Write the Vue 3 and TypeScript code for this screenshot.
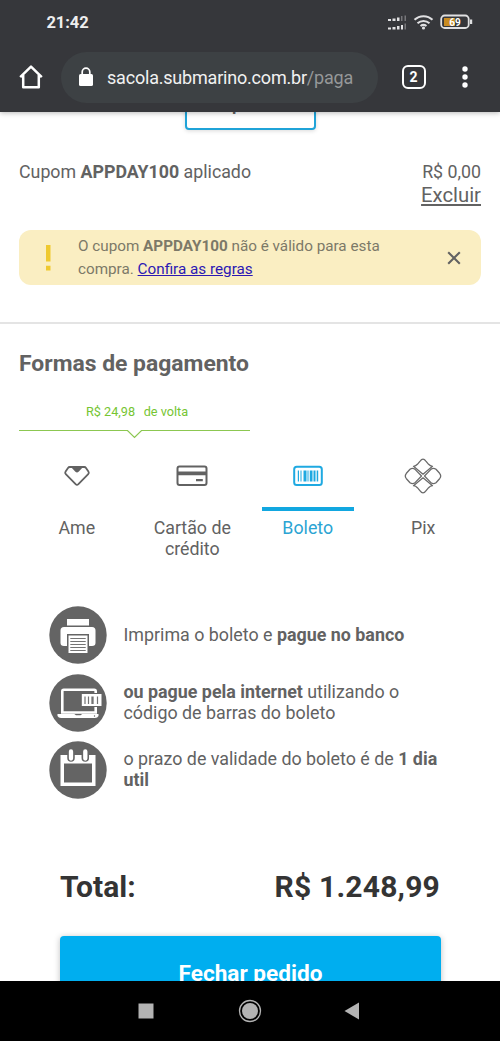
<script setup lang="ts">
interface Method {
  id: string
  label: string
}

const methods: Method[] = [
  { id: 'ame', label: 'Ame' },
  { id: 'card', label: 'Cartão de crédito' },
  { id: 'boleto', label: 'Boleto' },
  { id: 'pix', label: 'Pix' },
]
const selected = 'boleto'
</script>

<template>
  <div class="screen">
    <header class="chrome">
      <div class="status">
        <span class="clock">21:42</span>
        <svg class="status-icons" width="88" height="20" viewBox="0 0 88 20">
          <g fill="#e2e2e4">
            <path d="M1 7h3v2H1zM5.500 6.500h3V9h-3zM10 5.500h2.500V9H10z" />
            <path d="M1 15.500h3v2H1zM5.500 15h3v2.500h-3zM10 14h2.500v3.500H10zM14 13h2v4.500h-2z" />
          </g>
          <g fill="#77777b">
            <path d="M14 4h1.500v5H14zM17.500 3.500H19V9h-1.500zM17.500 11.500H19v6h-1.500z" />
          </g>
          <g fill="none" stroke="#e0e0e2" stroke-width="2">
            <path d="M27.500 7.800a13 13 0 0 1 18 0M30.500 11.200a9 9 0 0 1 12 0M33.500 14a5 5 0 0 1 6 0" />
            <rect x="54.200" y="3.500" width="27.500" height="12.500" rx="3.500" stroke-width="1.800" />
          </g>
          <circle cx="36.500" cy="16" r="1.600" fill="#e0e0e2" />
          <rect x="57" y="6" width="11" height="8" fill="#c98b22" />
          <rect x="83" y="7.500" width="2.200" height="4.500" fill="#e0e0e2" />
          <text x="68" y="13.500" text-anchor="middle">69</text>
        </svg>
      </div>
      <div class="toolbar">
        <svg class="home" width="26" height="26" viewBox="0 0 26 26">
          <path d="M2.200 13.200 13 2.600l10.800 10.600M5.200 11v12.200h15.600V11" fill="none" stroke="#fff" stroke-width="2.500" stroke-linejoin="round" />
        </svg>
        <div class="address">
          <svg width="16" height="20" viewBox="0 0 16 20">
            <rect x="1" y="7" width="14" height="12" rx="1.600" fill="#fff" />
            <path d="M4.200 8V5a3.800 3.800 0 0 1 7.600 0v3" fill="none" stroke="#fff" stroke-width="1.700" />
          </svg>
          <span class="url">sacola.submarino.com.br<i>/paga</i></span>
        </div>
        <div class="tab-count">2</div>
        <svg class="more" width="6" height="22" viewBox="0 0 6 22" fill="#fff">
          <circle cx="3" cy="3" r="2.700" /><circle cx="3" cy="11" r="2.700" /><circle cx="3" cy="19" r="2.700" />
        </svg>
      </div>
    </header>

    <main class="page">
      <div class="apply-row"><button class="apply">Aplicar</button></div>

      <section class="coupon">
        <p class="coupon-name">Cupom <b>APPDAY100</b> aplicado</p>
        <div class="coupon-side">
          <span class="amount">R$ 0,00</span>
          <a class="remove">Excluir</a>
        </div>
      </section>

      <section class="alert">
        <svg class="bang" width="8" height="28" viewBox="0 0 8 28" fill="#efc92f">
          <path d="M2 1h4.500v16.500H2zM2 21.800h4.500v4.700H2z" />
        </svg>
        <p>O cupom <b>APPDAY100</b> não é válido para esta<br />compra. <a>Confira as regras</a></p>
        <svg class="close" width="14" height="14" viewBox="0 0 14 14">
          <path d="m1.200 1.200 11.600 11.600M12.800 1.200 1.200 12.800" stroke="#626262" stroke-width="2.100" />
        </svg>
      </section>

      <div class="divider"></div>

      <h2>Formas de pagamento</h2>

      <div class="cashback">
        <p><span>R$ 24,98</span><span>de volta</span></p>
        <svg width="231" height="10" viewBox="0 0 231 10">
          <path d="M0 1.500h108.500L115.500 8.500l7-7H231" fill="none" stroke="#8cc751" stroke-width="1.200" />
        </svg>
      </div>

      <nav class="methods">
        <div v-for="m in methods" :key="m.id" class="method" :class="{ active: m.id === selected }">
          <div class="method-icon">
            <svg v-if="m.id === 'ame'" width="28" height="22" viewBox="0 0 28 22">
              <path d="M6.800 2h14.400q1.200 0 1.800.900l2.400 3.500q1 1.500-.200 2.700L15.400 19.200q-1.400 1.300-2.800 0L2.800 9.100q-1.200-1.200-.200-2.700L5 2.900Q5.600 2 6.800 2Z" fill="none" stroke="#626262" stroke-width="1.800" />
              <path d="M7.500 1.500h13L15.600 6.800q-1.600 1.500-3.200 0Z" fill="#626262" />
            </svg>
            <svg v-else-if="m.id === 'card'" width="32" height="22" viewBox="0 0 32 22">
              <rect x="1.500" y="1.500" width="29" height="18.600" rx="2" fill="none" stroke="#626262" stroke-width="2" />
              <path d="M1.500 6.500h29v3.800h-29zM20 14h6.800v2.200H20z" fill="#626262" />
            </svg>
            <svg v-else-if="m.id === 'boleto'" width="30" height="22" viewBox="0 0 30 22">
              <rect x="1.200" y="1.700" width="27.600" height="18.400" rx="2.500" fill="none" stroke="#1fa9e1" stroke-width="2" />
              <path d="M4.800 5.500H6v11H4.800zM7.500 5.500h1v11h-1zM10.500 5.500h3v11h-3zM14.500 5.500h1v11h-1zM16.800 5.500h2.700v11h-2.700zM20.500 5.500h2v11h-2zM23.700 5.500h1.500v11h-1.500z" fill="#1fa9e1" />
            </svg>
            <svg v-else width="38" height="38" viewBox="0 0 38 38">
              <g fill="none" stroke="#6b6b6b" stroke-width="1.300" stroke-linejoin="round">
                <g v-for="angle in [0, 180]" :key="angle" :transform="`rotate(${angle} 19 19)`">
                  <path d="M9.500 9.300q2.300-.200 3.900-2l2.700-3.200q2.900-4 5.800 0l2.700 3.200q1.600 1.800 3.900 2L19 17.200Z" />
                  <path d="M17.500 19 11.300 12.600Q8.700 10.300 6 12.300L2.400 16.300Q.200 19 2.400 21.700L6 25.700Q8.700 27.700 11.300 25.400Z" />
                </g>
              </g>
            </svg>
          </div>
          <div class="underline"></div>
          <span class="method-label">{{ m.label }}</span>
        </div>
      </nav>

      <ul class="steps">
        <li>
          <svg width="58" height="58" viewBox="0 0 58 58">
            <circle cx="29" cy="29" r="28.700" fill="#646464" />
            <path d="M18 13h22v6.500H18z" fill="#fff" />
            <path d="M15 21h28q3.500 0 3.500 3.500V37q0 3-3.500 3h-3V28H18v12h-3q-3.500 0-3.500-3V24.500Q11.500 21 15 21Z" fill="#fff" />
            <path d="M19.500 29.500h19V47h-19z" fill="#fff" />
            <path d="M21.300 32.500h15.400M21.300 35.500h15.400M21.300 38.500h15.400M21.300 41.500h15.400M21.300 44.500h15.400" stroke="#747474" stroke-width="1.100" />
          </svg>
          <p>Imprima o boleto e <b>pague no banco</b></p>
        </li>
        <li>
          <svg width="58" height="58" viewBox="0 0 58 58">
            <circle cx="29" cy="29" r="28.700" fill="#646464" />
            <path d="M13.300 38.500V17.300q0-1.500 1.500-1.500h30.400q1.500 0 1.500 1.500v21.200Z" fill="none" stroke="#fff" stroke-width="2.600" />
            <path d="M31.500 19h21v14h-21z" fill="#646464" />
            <path d="M32.800 20h19.700V32H32.800z" fill="#fff" />
            <path d="M36 22.500v7.500M39.500 22.500v7.500M48.500 22.500v7.500" stroke="#747474" stroke-width="1.200" />
            <path d="M43.500 22.500v7.500" stroke="#747474" stroke-width="2.300" />
            <path d="M8.500 40h16.800l1.700 1.300h4.500l1.700-1.300h16.300v2q-1 2-3.500 2H12q-2.500 0-3.500-2Z" fill="#fff" />
            <circle cx="45.500" cy="42" r=".7" fill="#646464" />
          </svg>
          <p><b>ou pague pela internet</b> utilizando o<br />código de barras do boleto</p>
        </li>
        <li>
          <svg width="58" height="58" viewBox="0 0 58 58">
            <circle cx="29" cy="29" r="28.700" fill="#646464" />
            <path d="M11.500 14h35v31h-35zM15 22.500v19h28v-19Z" fill="#fff" fill-rule="evenodd" />
            <path d="M22 11v6M36.300 11v6" stroke="#646464" stroke-width="7.500" stroke-linecap="round" />
            <path d="M22 10.500v7M36.300 10.500v7" stroke="#fff" stroke-width="4.300" stroke-linecap="round" />
          </svg>
          <p>o prazo de validade do boleto é de <b>1 dia<br />util</b></p>
        </li>
      </ul>

      <div class="total"><span>Total:</span><span class="total-value">R$ 1.248,99</span></div>
      <button class="checkout">Fechar pedido</button>
    </main>

    <footer class="system-nav">
      <svg width="16" height="16" viewBox="0 0 16 16"><path d="M.500.500h15v15H.500z" fill="#b3b3b3" /></svg>
      <svg width="24" height="24" viewBox="0 0 24 24">
        <circle cx="12" cy="12" r="10.500" fill="none" stroke="#b3b3b3" stroke-width="1.300" />
        <circle cx="12" cy="12" r="8" fill="#b3b3b3" />
      </svg>
      <svg class="back" width="16" height="18" viewBox="0 0 16 18"><path d="M.500 9 15 .500v17z" fill="#b3b3b3" /></svg>
    </footer>
  </div>
</template>

<style>
body {
  margin: 0;
  background: #fff;
}
</style>

<style scoped>
.screen {
  width: 500px;
  height: 1041px;
  display: flex;
  flex-direction: column;
  overflow: hidden;
  background: #fff;
  color: #626262;
  font-family: Roboto, "Liberation Sans", sans-serif;
}
p, h2, ul { margin: 0; padding: 0; }
svg { display: block; flex: none; }

.chrome {
  position: relative;
  z-index: 1;
  flex: none;
  height: 112px;
  background: #36373b;
  box-shadow: 0 1px 5px rgba(0, 0, 0, .28);
}
.status {
  height: 44px;
  display: flex;
  justify-content: space-between;
  align-items: center;
  padding: 0 25px 0 46.500px;
  box-sizing: border-box;
}
.clock { color: #eee; font-size: 16.500px; font-weight: 700; letter-spacing: -.1px; }
.status-icons text { font-size: 10px; font-weight: 700; fill: #fff; }
.toolbar { height: 66px; display: flex; align-items: center; }
.home { margin-left: 17.500px; }
.address {
  width: 317px;
  height: 51px;
  margin-left: 17.500px;
  padding-left: 17px;
  box-sizing: border-box;
  display: flex;
  align-items: center;
  gap: 13px;
  border-radius: 26px;
  background: #3d4144;
}
.url { color: #f1f1f1; font-size: 18px; letter-spacing: -.2px; white-space: nowrap; }
.url i { font-style: normal; color: #969899; }
.tab-count {
  width: 24px;
  height: 24px;
  margin-left: 23.500px;
  box-sizing: border-box;
  border: 2.500px solid #fff;
  border-radius: 6px;
  color: #fff;
  font-size: 14px;
  font-weight: 700;
  line-height: 20px;
  text-align: center;
}
.more { margin-left: 36px; }

.page {
  flex: none;
  height: 869px;
  overflow: hidden;
  display: flex;
  flex-direction: column;
}
.apply-row { flex: none; height: 18px; display: flex; justify-content: center; align-items: flex-end; }
.apply {
  width: 131px;
  height: 54px;
  flex: none;
  padding: 0;
  border: 2px solid #1fa3d8;
  border-radius: 4px;
  background: #fff;
  box-shadow: 0 1px 4px rgba(0, 0, 0, .15);
  color: #626262;
  font: 500 20px/24px Roboto, sans-serif;
}
.coupon {
  flex: none;
  height: 69px;
  margin: 31px 19px 0;
  display: flex;
  justify-content: space-between;
  font-size: 17.800px;
  line-height: 22px;
}
.coupon-side { display: flex; flex-direction: column; align-items: flex-end; }
.remove { font-size: 20.300px; line-height: 24px; text-decoration: underline; }
.alert {
  flex: none;
  height: 55px;
  margin: 0 19px;
  padding: 0 20px 0 25px;
  box-sizing: border-box;
  display: flex;
  align-items: center;
  border-radius: 12px;
  background: #faeec2;
}
.alert p {
  flex: 1;
  margin-left: 26px;
  color: #7c7968;
  font-size: 15.260px;
  line-height: 23px;
}
.alert a { color: #2b18b4; text-decoration: underline; }
.divider { flex: none; height: 2px; margin-top: 37px; background: #e4e4e4; }
h2 {
  flex: none;
  margin: 26px 19px 0;
  font-size: 22.900px;
  font-weight: 700;
  line-height: 28px;
}
.cashback { flex: none; width: 231px; margin: 25px 0 0 19px; }
.cashback p {
  display: flex;
  gap: 8.500px;
  height: 26px;
  padding-left: 67px;
  color: #76c532;
  font-size: 12.700px;
  line-height: 17px;
}
.methods {
  flex: none;
  height: 151px;
  margin: 0 19px;
  padding-top: 17px;
  box-sizing: border-box;
  display: grid;
  grid-template-columns: repeat(4, 1fr);
}
.method { display: flex; flex-direction: column; align-items: center; }
.method-icon { height: 40px; display: flex; align-items: center; }
.underline { width: 92.500px; height: 4px; margin-top: 11px; }
.active .underline { background: #12a7e0; }
.method-label {
  width: 90px;
  margin-top: 6px;
  font-size: 17.800px;
  line-height: 21px;
  text-align: center;
}
.active .method-label { color: #2ba4d3; }

.steps {
  flex: none;
  margin: 16px 0 0 49px;
  display: flex;
  flex-direction: column;
  gap: 9.500px;
  list-style: none;
}
.steps li {
  height: 58px;
  display: flex;
  align-items: center;
  gap: 16.500px;
  font-size: 17.850px;
  line-height: 21px;
  white-space: nowrap;
}
.steps p { padding-bottom: 2px; }
.total {
  flex: none;
  margin: 70px 60px 0;
  display: flex;
  justify-content: space-between;
  color: #343434;
  font-size: 30px;
  font-weight: 700;
  line-height: 36px;
}
.total-value { letter-spacing: .2px; }
.checkout {
  flex: none;
  width: 381px;
  height: 74px;
  margin: 31px 0 0 60px;
  padding: 0;
  border: 0;
  border-radius: 4px;
  background: #00aeef;
  box-shadow: 0 1px 6px rgba(0, 0, 0, .25);
  color: #fff;
  font: 700 22.600px Roboto, sans-serif;
}
.system-nav {
  position: relative;
  flex: none;
  height: 60px;
  padding-left: 138px;
  display: flex;
  align-items: center;
  gap: 84px;
  background: #000;
}
.back { margin-left: -2px; }
</style>
